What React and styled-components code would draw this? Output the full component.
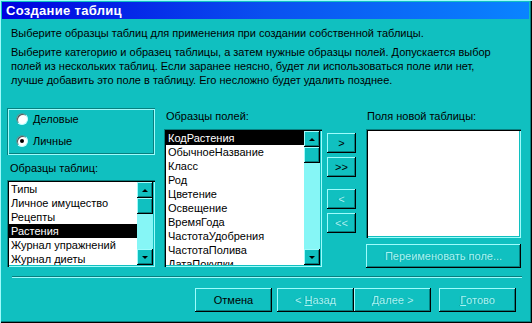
import React from 'react'
import styled, { createGlobalStyle } from 'styled-components'

const Global = createGlobalStyle`
body{
  margin:0;
  background:#10c0c0;
  font-family:"Liberation Sans", Arial, sans-serif;
  font-size:11px;
  color:#000;
}
`

const Window = styled.div`
width:532px;
height:323px;
box-sizing:border-box;
padding:2px;
background:#10c0c0;
box-shadow:inset 1px 1px 0 #9ffcfc, inset -1px -1px 0 #000, inset -2px -2px 0 #077f7f;
display:flex;
flex-direction:column;
overflow:hidden;
`

const TitleBar = styled.div`
height:17px;
margin-right:1px;
padding-left:4px;
display:flex;
align-items:center;
background:linear-gradient(90deg,#0000e0 0%,#0a50f0 50%,#0a84ff 100%);
color:#fff;
font-weight:bold;
font-size:13px;
letter-spacing:0.3px;
`

const Body = styled.div`
padding:0 8px 0 5px;
display:flex;
flex-direction:column;
`

const Text = styled.div`
padding-left:4px;
line-height:14px;
white-space:nowrap;
margin-top:${p => p.$top || 0}px;
`

const Main = styled.div`
display:flex;
align-items:flex-start;
margin-top:21px;
`

const Column = styled.div`
display:flex;
flex-direction:column;
width:${p => p.$w}px;
margin-left:${p => p.$ml || 0}px;
padding-top:${p => p.$pt || 0}px;
`

const GroupBox = styled.div`
height:47px;
box-sizing:border-box;
box-shadow:inset 1px 1px 0 #077f7f, inset 2px 2px 0 #9ffcfc, inset -1px -1px 0 #9ffcfc, inset -2px -2px 0 #077f7f;
padding:3px 0 0 9px;
display:flex;
flex-direction:column;
gap:6px;
`

const RadioRow = styled.div`
height:16px;
display:flex;
align-items:center;
gap:5px;
`

const RadioDot = styled.span`
width:12px;
height:12px;
box-sizing:border-box;
border-radius:50%;
background:#fff;
border:1px solid;
border-color:#3a9a9a #bfffff #bfffff #3a9a9a;
box-shadow:inset 1px 1px 0 #555;
display:flex;
align-items:center;
justify-content:center;
&::after{
  content:'';
  width:4px;
  height:4px;
  border-radius:50%;
  background:${p => p.$on ? '#000' : 'transparent'};
}
`

const Label = styled.div`
line-height:14px;
padding-left:${p => p.$pl || 0}px;
margin-top:${p => p.$mt || 0}px;
white-space:nowrap;
`

const ListBox = styled.div`
height:${p => p.$h}px;
margin-top:${p => p.$mt || 0}px;
box-sizing:border-box;
padding:2px;
background:#fff;
box-shadow:inset 1px 1px 0 #077f7f, inset 2px 2px 0 #000, inset -1px -1px 0 #9ffcfc, inset -2px -2px 0 #10c0c0;
display:flex;
overflow:hidden;
`

const Items = styled.div`
flex:1;
display:flex;
flex-direction:column;
overflow:hidden;
`

const Item = styled.div`
height:14px;
line-height:14px;
flex-shrink:0;
padding-left:2px;
white-space:nowrap;
background:${p => p.$sel ? '#000' : 'transparent'};
color:${p => p.$sel ? '#fff' : '#000'};
`

const ScrollBar = styled.div`
width:16px;
background:#86f6f6;
display:flex;
flex-direction:column;
justify-content:space-between;
`

const ScrollTop = styled.div`
display:flex;
flex-direction:column;
`

const ScrollBtn = styled.div`
width:16px;
height:16px;
box-sizing:border-box;
background:#10c0c0;
box-shadow:inset -1px -1px 0 #000, inset 1px 1px 0 #9ffcfc, inset -2px -2px 0 #077f7f;
display:flex;
align-items:center;
justify-content:center;
`

const Arrow = styled.span`
width:0;
height:0;
border-left:3px solid transparent;
border-right:3px solid transparent;
${p => p.$down ? 'border-top:3px solid #000;' : 'border-bottom:3px solid #000;'}
margin-right:1px;
`

const Button = styled.div`
width:${p => p.$w}px;
height:${p => p.$h}px;
margin-top:${p => p.$mt || 0}px;
box-sizing:border-box;
background:#10c0c0;
box-shadow:inset -1px -1px 0 #000, inset 1px 1px 0 #9ffcfc, inset -2px -2px 0 #077f7f;
display:flex;
align-items:center;
justify-content:center;
white-space:nowrap;
color:${p => p.$off ? '#a8f2f2' : '#000'};
text-shadow:${p => p.$off ? '-1px 0 0 rgba(0,110,110,0.35)' : 'none'};
font-size:11px;
`

const Separator = styled.div`
height:2px;
margin:8px 0 0 5px;
box-shadow:inset 0 1px 0 #077f7f, inset 0 -1px 0 #9ffcfc;
`

const Footer = styled.div`
display:flex;
justify-content:flex-end;
align-items:center;
margin-top:10px;
padding-right:6px;
`

const Gap = styled.div`
width:${p => p.$w}px;
`

function List({ items, selected, height, mt }) {
  return (
    <ListBox $h={height} $mt={mt}>
      <Items>
        {items.map(i => <Item key={i} $sel={i === selected}>{i}</Item>)}
      </Items>
      <ScrollBar>
        <ScrollTop>
          <ScrollBtn><Arrow /></ScrollBtn>
          <ScrollBtn />
        </ScrollTop>
        <ScrollBtn><Arrow $down /></ScrollBtn>
      </ScrollBar>
    </ListBox>
  )
}

const tables = ['Типы', 'Личное имущество', 'Рецепты', 'Растения', 'Журнал упражнений', 'Журнал диеты']
const fields = ['КодРастения', 'ОбычноеНазвание', 'Класс', 'Род', 'Цветение', 'Освещение', 'ВремяГода', 'ЧастотаУдобрения', 'ЧастотаПолива', 'ДатаПокупки']

export default function App() {
  return (
    <Window>
      <Global />
      <TitleBar>Создание таблиц</TitleBar>
      <Body>
        <Text $top={7}>Выберите образцы таблиц для применения при создании собственной таблицы.</Text>
        <Text $top={5}>
          Выберите категорию и образец таблицы, а затем нужные образцы полей. Допускается выбор<br />
          полей из нескольких таблиц. Если заранее неясно, будет ли использоваться поле или нет,<br />
          лучше добавить это поле в таблицу. Его несложно будет удалить позднее.
        </Text>
        <Main>
          <Column $w={148}>
            <GroupBox>
              <RadioRow><RadioDot />Деловые</RadioRow>
              <RadioRow><RadioDot $on />Личные</RadioRow>
            </GroupBox>
            <Label $pl={3} $mt={6}>Образцы таблиц:</Label>
            <List items={tables} selected="Растения" height={87} mt={5} />
          </Column>
          <Column $w={158} $ml={9}>
            <Label $pl={2} $mt={1}>Образцы полей:</Label>
            <List items={fields} selected="КодРастения" height={138} mt={6} />
          </Column>
          <Column $w={29} $ml={5} $pt={25}>
            <Button $w={29} $h={20}>&gt;</Button>
            <Button $w={29} $h={20} $mt={4}>&gt;&gt;</Button>
            <Button $w={29} $h={20} $mt={12} $off>&lt;</Button>
            <Button $w={29} $h={20} $mt={4} $off>&lt;&lt;</Button>
          </Column>
          <Column $w={155} $ml={10}>
            <Label $pl={1} $mt={1}>Поля новой таблицы:</Label>
            <ListBox $h={109} $mt={6} />
            <Button $w={155} $h={24} $mt={6} $off>Переименовать поле...</Button>
          </Column>
        </Main>
        <Separator />
        <Footer>
          <Button $w={77} $h={24}>Отмена</Button>
          <Gap $w={5} />
          <Button $w={77} $h={24} $off>&lt;&nbsp;<u>Н</u>азад</Button>
          <Button $w={77} $h={24} $off><u>Д</u>алее &gt;</Button>
          <Gap $w={8} />
          <Button $w={77} $h={24} $off><u>Г</u>отово</Button>
        </Footer>
      </Body>
    </Window>
  )
}
